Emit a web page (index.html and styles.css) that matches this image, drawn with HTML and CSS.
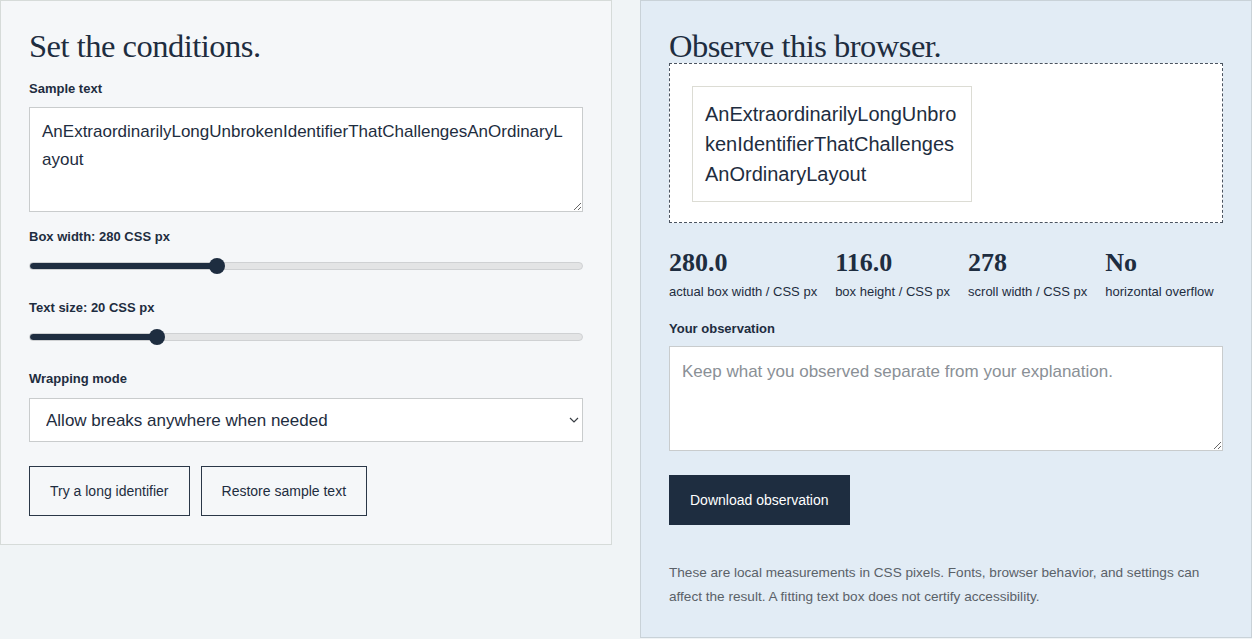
FILE: index.html
```html
<!DOCTYPE html>
<html lang="en">
<head>
<meta charset="utf-8">
<title>Text box fitting</title>
<link rel="stylesheet" href="styles.css">
</head>
<body>
<main class="layout">
  <section class="panel panel-controls">
    <h1 class="panel-title">Set the conditions.</h1>

    <div class="field field-first">
      <label class="field-label" for="sample">Sample text</label>
      <textarea id="sample" class="text-input sample-input">AnExtraordinarilyLongUnbrokenIdentifierThatChallengesAnOrdinaryLayout</textarea>
    </div>

    <div class="field">
      <label class="field-label" for="box-width">Box width: 280 CSS px</label>
      <input type="range" id="box-width" class="range" min="160" max="520" value="280" style="--fill: 33.8%">
    </div>

    <div class="field">
      <label class="field-label" for="text-size">Text size: 20 CSS px</label>
      <input type="range" id="text-size" class="range" min="16" max="34" value="20" style="--fill: 22.9%">
    </div>

    <div class="field">
      <label class="field-label" for="mode">Wrapping mode</label>
      <div class="select-wrap">
        <select id="mode" class="select">
          <option>Allow breaks anywhere when needed</option>
          <option>Normal word wrapping</option>
          <option>Never break</option>
        </select>
        <svg class="select-chevron" width="10" height="6" viewBox="0 0 10 6" aria-hidden="true"><path d="M1 1l4 4 4-4" fill="none" stroke="#3a3f45" stroke-width="1.2"/></svg>
      </div>
    </div>

    <div class="button-row">
      <button type="button" class="btn btn-outline">Try a long identifier</button>
      <button type="button" class="btn btn-outline">Restore sample text</button>
    </div>
  </section>

  <section class="panel panel-observe">
    <h2 class="panel-title">Observe this browser.</h2>
    <div class="stage">
      <div class="preview">AnExtraordinarilyLongUnbrokenIdentifierThatChallengesAnOrdinaryLayout</div>
    </div>

    <dl class="stats">
      <div class="stat">
        <dt class="stat-value">280.0</dt>
        <dd class="stat-label">actual box width / CSS px</dd>
      </div>
      <div class="stat">
        <dt class="stat-value">116.0</dt>
        <dd class="stat-label">box height / CSS px</dd>
      </div>
      <div class="stat">
        <dt class="stat-value">278</dt>
        <dd class="stat-label">scroll width / CSS px</dd>
      </div>
      <div class="stat">
        <dt class="stat-value">No</dt>
        <dd class="stat-label">horizontal overflow</dd>
      </div>
    </dl>

    <div class="field field-observation">
      <label class="field-label" for="observation">Your observation</label>
      <textarea id="observation" class="text-input observation-input" placeholder="Keep what you observed separate from your explanation."></textarea>
    </div>

    <button type="button" class="btn btn-solid">Download observation</button>

    <p class="note">These are local measurements in CSS pixels. Fonts, browser behavior, and settings can affect the result. A fitting text box does not certify accessibility.</p>
  </section>
</main>
</body>
</html>
```

FILE: styles.css
```css
* {
  box-sizing: border-box;
}

html, body {
  margin: 0;
  padding: 0;
}

body {
  background: #f0f4f6;
  color: #1e2d40;
  font-family: "Liberation Sans", Arial, sans-serif;
  font-size: 16px;
}

.layout {
  display: grid;
  grid-template-columns: 612px 612px;
  column-gap: 28px;
  align-items: start;
  width: 1252px;
}

.panel {
  padding: 28px 28px 28px 28px;
  border: 1px solid #d6dbd9;
}

.panel-controls {
  background: #f5f7f9;
}

.panel-observe {
  background: #e2ecf5;
  border-color: #c9d2d8;
}

.panel-title {
  margin: 0;
  font-family: "Liberation Serif", "Times New Roman", serif;
  font-weight: 400;
  font-size: 32.5px;
  letter-spacing: -0.5px;
  line-height: 34px;
  color: #1e2d40;
}

.field {
  display: flex;
  flex-direction: column;
  margin-top: 17px;
}

.field-first {
  margin-top: 18px;
}

.field-label {
  display: block;
  font-size: 13px;
  font-weight: 700;
  line-height: 16px;
  margin-bottom: 11px;
  color: #1e2d40;
}

.field-first .field-label {
  margin-bottom: 10px;
}

.text-input {
  display: block;
  width: 100%;
  margin: 0;
  border: 1px solid #c9cccd;
  background: #fff;
  font-family: "Liberation Sans", Arial, sans-serif;
  font-size: 17px;
  line-height: 28px;
  color: #1e2d40;
  padding: 10px 12px;
}

.sample-input {
  height: 105px;
}

.observation-input {
  height: 105px;
  padding-top: 11px;
}

.observation-input::placeholder {
  color: #8a9096;
}

.range {
  -webkit-appearance: none;
  appearance: none;
  display: block;
  width: 100%;
  height: 20px;
  margin: 0 0 7px 0;
  background: transparent;
}

.range::-webkit-slider-runnable-track {
  height: 8px;
  border-radius: 4px;
  border: 1px solid #cfd1d3;
  background: linear-gradient(to right, #1e2d40 0, #1e2d40 var(--fill), #e3e4e5 var(--fill), #e3e4e5 100%);
}

.range::-webkit-slider-thumb {
  -webkit-appearance: none;
  appearance: none;
  width: 16px;
  height: 16px;
  border-radius: 50%;
  background: #1e2d40;
  border: none;
  margin-top: -5px;
}

.select-wrap {
  position: relative;
}

.select {
  -webkit-appearance: none;
  appearance: none;
  display: block;
  width: 100%;
  height: 44px;
  margin: 0;
  padding: 0 30px 0 16px;
  border: 1px solid #c9cccd;
  border-radius: 0;
  background: #fff;
  font-family: "Liberation Sans", Arial, sans-serif;
  font-size: 17px;
  color: #1e2d40;
}

.select-chevron {
  position: absolute;
  right: 4px;
  top: 19px;
}

.button-row {
  display: flex;
  gap: 11px;
  margin-top: 24px;
}

.btn {
  font-family: "Liberation Sans", Arial, sans-serif;
  font-size: 14px;
  height: 50px;
  margin: 0;
  border-radius: 0;
  cursor: pointer;
}

.btn-outline {
  background: transparent;
  color: #1e2d40;
  border: 1.5px solid #2a3747;
  padding: 0 20px;
}

.btn-solid {
  display: block;
  margin-top: 24px;
  background: #1e2d40;
  color: #fff;
  border: none;
  padding: 0 21px;
}

.stage {
  margin-top: 0;
  height: 160px;
  border: 1px dashed #4b5460;
  background: #fff;
  padding: 22px;
}

.preview {
  width: 280px;
  border: 1px solid #dcdcd4;
  padding: 12px;
  font-size: 20px;
  line-height: 30px;
  color: #1e2d40;
  overflow-wrap: anywhere;
  background: #fff;
}

.stats {
  display: flex;
  gap: 18px;
  margin: 26px 0 0 0;
}

.stat {
  display: flex;
  flex-direction: column;
}

.stat-value {
  font-family: "Liberation Serif", "Times New Roman", serif;
  font-weight: 700;
  font-size: 26px;
  line-height: 28px;
  color: #1e2d40;
}

.stat-label {
  margin: 7px 0 0 0;
  font-size: 13px;
  line-height: 16px;
  color: #1e2d40;
}

.field-observation {
  margin-top: 21px;
}

.field-observation .field-label {
  margin-bottom: 9px;
}

.note {
  margin: 36px 0 0 0;
  font-size: 13.6px;
  line-height: 24px;
  color: #5a6168;
}
```
